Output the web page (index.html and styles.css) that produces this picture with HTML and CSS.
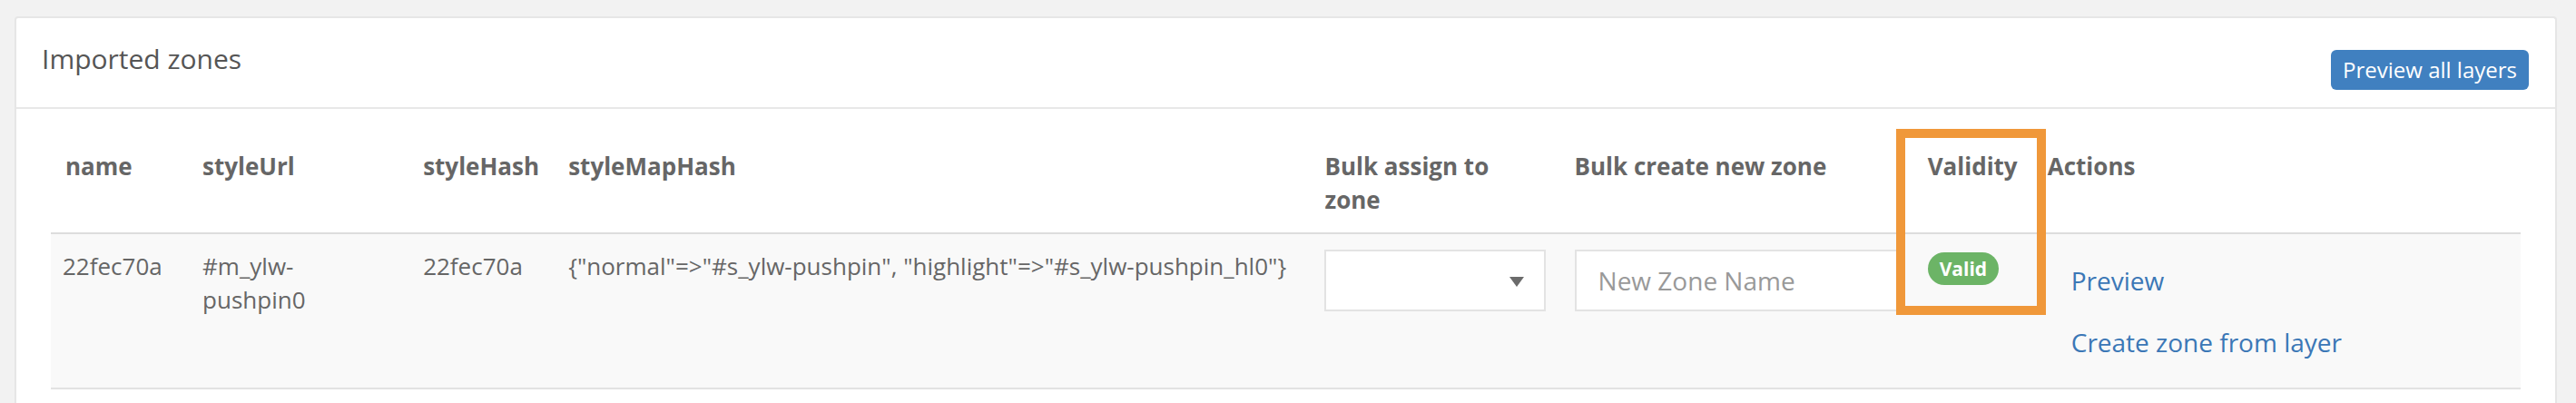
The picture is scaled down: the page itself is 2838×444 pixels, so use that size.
FILE: index.html
```html
<!DOCTYPE html>
<html lang="en">
<head>
<meta charset="utf-8">
<title>Imported zones</title>
<link rel="stylesheet" href="styles.css">
</head>
<body>
<div class="panel">
  <div class="panel-heading">
    <h3 class="panel-title">Imported zones</h3>
    <button class="btn-primary" type="button">Preview all layers</button>
  </div>
  <div class="panel-body">
    <table class="zones">
      <colgroup>
        <col class="c-name">
        <col class="c-url">
        <col class="c-hash">
        <col class="c-map">
        <col class="c-assign">
        <col class="c-create">
        <col class="c-valid">
        <col class="c-actions">
      </colgroup>
      <thead>
        <tr>
          <th>name</th>
          <th>styleUrl</th>
          <th>styleHash</th>
          <th>styleMapHash</th>
          <th>Bulk assign to zone</th>
          <th>Bulk create new zone</th>
          <th>Validity</th>
          <th>Actions</th>
        </tr>
      </thead>
      <tbody>
        <tr>
          <td>22fec70a</td>
          <td>#m_ylw-pushpin0</td>
          <td>22fec70a</td>
          <td>{"normal"=&gt;"#s_ylw-pushpin", "highlight"=&gt;"#s_ylw-pushpin_hl0"}</td>
          <td>
            <div class="select">
              <svg class="caret" width="16" height="11" viewBox="0 0 16 11"><path d="M0 0 H16 L8 11 Z" fill="#6b6b6b"/></svg>
            </div>
          </td>
          <td><input class="form-control" type="text" placeholder="New Zone Name"></td>
          <td><span class="label-valid">Valid</span></td>
          <td>
            <a class="btn-link" href="#">Preview</a>
            <a class="btn-link" href="#">Create zone from layer</a>
          </td>
        </tr>
      </tbody>
    </table>
  </div>
</div>
<div class="highlight-box"></div>
</body>
</html>
```

FILE: styles.css
```css
html, body {
  margin: 0;
  padding: 0;
}
html {
  height: 444px;
  overflow: hidden;
}
body {
  background: #f2f2f2;
  font-family: "Open Sans", "Liberation Sans", sans-serif;
  color: #666;
  position: relative;
  height: 444px;
  padding-top: 18px;
  box-sizing: border-box;
  overflow: hidden;
}
.panel {
  box-sizing: border-box;
  height: 426px;
  margin: 0 21px 0 16px;
  background: #fff;
  border: 2px solid #e6e6e6;
  border-bottom: 0;
  border-radius: 4px 4px 0 0;
}
.panel-heading {
  display: flex;
  justify-content: space-between;
  align-items: flex-start;
  height: 98px;
  padding: 0 29px 0 28px;
  border-bottom: 2px solid #e8e8e8;
}
.panel-title {
  margin: 28px 0 0;
  font-size: 30px;
  line-height: 33px;
  font-weight: 400;
  color: #555;
}
.btn-primary {
  margin-top: 35px;
  height: 44px;
  padding: 0 13px;
  border: 0;
  border-radius: 6px;
  background: #4080c0;
  color: #fff;
  font-family: "Open Sans", "Liberation Sans", sans-serif;
  font-size: 24px;
  line-height: 44px;
}
.panel-body {
  padding: 29px 38px 0;
}
.zones {
  width: 100%;
  table-layout: fixed;
  border-collapse: collapse;
  font-size: 26px;
  line-height: 37px;
}
.c-name { width: 151px; }
.c-url { width: 243px; }
.c-hash { width: 160px; }
.c-map { width: 833px; }
.c-assign { width: 275px; }
.c-create { width: 389px; }
.c-valid { width: 132px; }
.c-actions { width: 537px; }
.zones th {
  text-align: left;
  vertical-align: top;
  font-weight: 700;
  color: #666;
  padding: 16px 16px 17px;
}
.zones td {
  vertical-align: top;
  background: #f9f9f9;
  border-top: 2px solid #dddddd;
  border-bottom: 2px solid #e2e2e2;
  padding: 17px 16px 16px;
  color: #666;
}
.zones td:first-child {
  padding-left: 13px;
}
.select {
  box-sizing: border-box;
  height: 68px;
  width: 100%;
  background: #fff;
  border: 2px solid #e3e3e3;
  display: flex;
  align-items: center;
  justify-content: flex-end;
  padding-right: 22px;
}
.caret {
  display: block;
  margin-top: 2px;
}
.form-control {
  box-sizing: border-box;
  display: block;
  width: 100%;
  height: 68px;
  padding: 0 24px;
  border: 2px solid #e3e3e3;
  background: #fff;
  font-family: "Open Sans", "Liberation Sans", sans-serif;
  font-size: 28px;
  color: #555;
  outline: none;
}
.form-control::placeholder {
  color: #999;
}
.label-valid {
  display: inline-block;
  vertical-align: top;
  margin-top: 3px;
  height: 36px;
  line-height: 36px;
  padding: 0 13px;
  border-radius: 18px;
  background: #6cb466;
  color: #fff;
  font-size: 21px;
  font-weight: 700;
}
.btn-link {
  display: block;
  width: max-content;
  padding: 12px 24px;
  border: 2px solid transparent;
  font-size: 28px;
  line-height: 40px;
  color: #3b77b6;
  text-decoration: none;
}
.highlight-box {
  position: absolute;
  left: 2089px;
  top: 142px;
  width: 145px;
  height: 185px;
  border: 10px solid #f0983a;
}
```
